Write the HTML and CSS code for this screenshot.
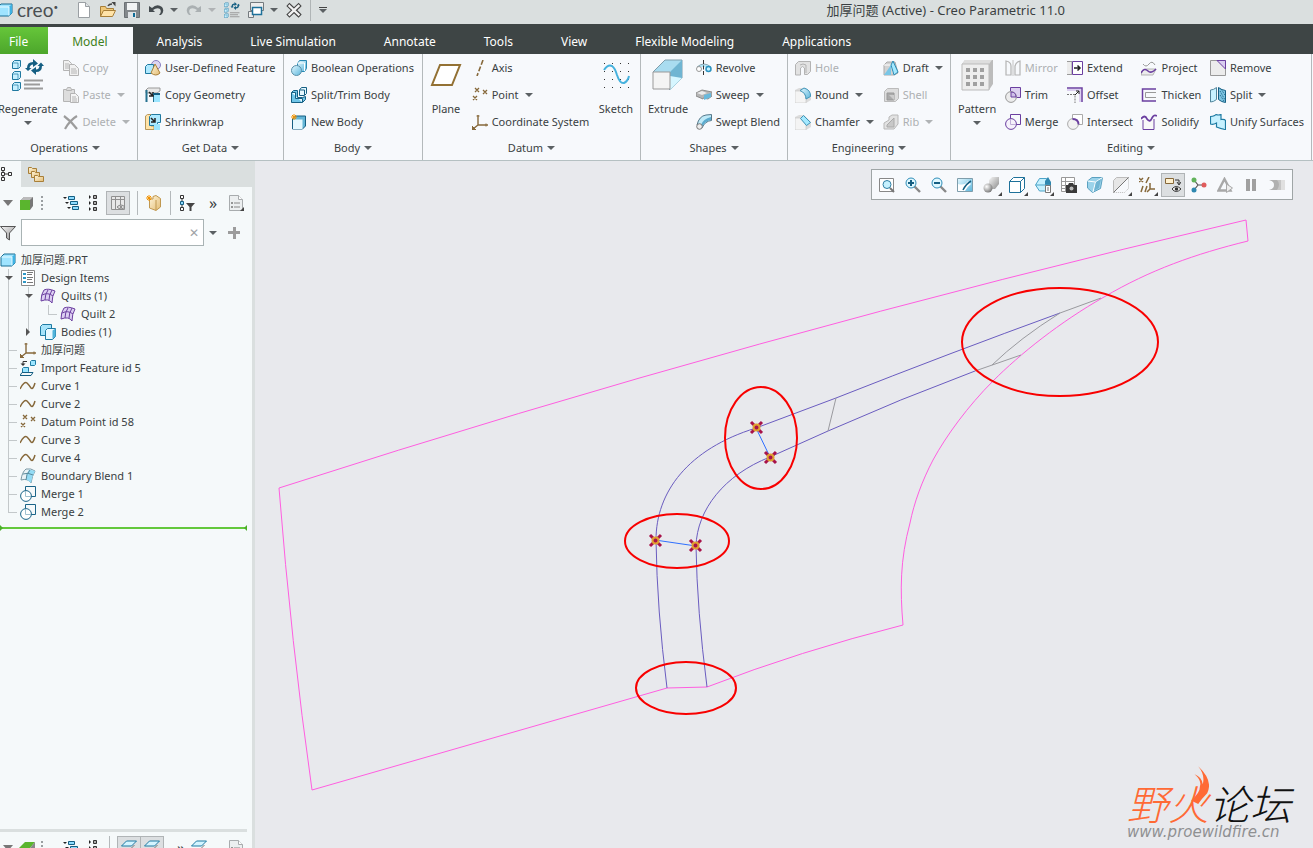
FILE: index.html
```html
<!DOCTYPE html>
<html lang="en">
<head>
  <meta charset="UTF-8">
  <meta name="viewport" content="width=device-width, initial-scale=1.0">
  <title>加厚问题 (Active) - Creo Parametric 11.0</title>
  <link rel="stylesheet" href="styles.css">
</head>
<body>

  <!-- Icon sprite -->
  <svg class="sprite" aria-hidden="true">
    <defs>
      <linearGradient id="g-blue" x1="0" y1="0" x2="1" y2="1"><stop offset="0" stop-color="#e4f8ff"/><stop offset="1" stop-color="#5cb6dc"/></linearGradient>
      <linearGradient id="g-grey" x1="0" y1="0" x2="1" y2="1"><stop offset="0" stop-color="#f6f6f6"/><stop offset="1" stop-color="#8c8c8c"/></linearGradient>
      <linearGradient id="g-tan" x1="0" y1="0" x2="1" y2="1"><stop offset="0" stop-color="#fff6dc"/><stop offset="1" stop-color="#e3bc74"/></linearGradient>
      <radialGradient id="g-ball" cx=".35" cy=".35" r=".7"><stop offset="0" stop-color="#fff"/><stop offset="1" stop-color="#777"/></radialGradient>
    </defs>
    <symbol id="i-cube" viewBox="0 0 16 16"><path d="M1 5l3-3h11v9l-3 3H1z" fill="#9fe4ff" stroke="#1b6f94"/><path d="M12 14V5l3-3v9z" fill="#3fb2e3"/><path d="M1.500 5H12v8.500" fill="none" stroke="#e8faff"/></symbol>
    <symbol id="i-new" viewBox="0 0 16 16"><path d="M2.500.5h7l4 4v11h-11z" fill="#fff" stroke="#9a9fa3"/><path d="M9.500.5v4h4" fill="#dfe3e6" stroke="#9a9fa3"/></symbol>
    <symbol id="i-open" viewBox="0 0 16 16"><path d="M.5 14.500V4.500h5l1 2h7v3" fill="#f0c879" stroke="#a87f38"/><path d="M.5 14.500l3-6h12l-3 6z" fill="#ffe3a8" stroke="#a87f38"/><path d="M8 4q1-2 4-2" fill="none" stroke="#444" stroke-width="1.500"/><path d="M11.500 0l4 0v4.500z" fill="#444"/></symbol>
    <symbol id="i-save" viewBox="0 0 16 16"><path d="M.5.5h15v15H.5z" fill="#83888c" stroke="#6b7074"/><path d="M3 1h10v7H3z" fill="#f2f4f5"/><path d="M4 10h8v6H4z" fill="#dfe3e6"/><path d="M9 11h2v4H9z" fill="#0f6b96"/></symbol>
    <symbol id="i-undo" viewBox="0 0 16 16"><path d="M1 4v6h6L5 8q4-3 7-1 2 3-1 6h2q4-4 1-8-5-4-10 1z" fill="#444b4f"/></symbol>
    <symbol id="i-redo" viewBox="0 0 16 16"><path d="M15 4v6H9l2-2Q7 5 4 7q-2 3 1 6H3q-4-4-1-8 5-4 10 1z" fill="#aab0b2"/></symbol>
    <symbol id="i-regen" viewBox="0 0 32 32">
      <g fill="#c8f0ff" stroke="#2079a0"><path d="M.5 3.500l2-2h6v6l-2 2h-6zM.5 14.500l2-2h6v6l-2 2h-6zM.5 25.500l2-2h6v6l-2 2h-6z"/></g>
      <path d="M1 4h5v5M1 15h5v5M1 26h5v5" fill="none" stroke="#2079a0" stroke-width=".7"/>
      <path d="M15 9q0-6 6-6V0l5 4.500L21 8V5.500q-3 0-3.500 3.500h2L16 12l-3-3zM30 7q0 6-6 6v3l-5-4.500L24 8v2.500q3 0 3.500-3.500h-2L29 3.500 32 7z" fill="#155f83"/>
      <path d="M12 21.500h19M12 25.500h16M12 29.500h19" stroke="#9b9b9b" stroke-width="2"/></symbol>
    <symbol id="i-windows" viewBox="0 0 16 16"><path d="M2.500.5h13v8h-13zM.5 9.500h5v6h-5z" fill="#eee" stroke="#747a7e"/><path d="M4.500 5.500h9v7h-9z" fill="#fff" stroke="#1e719a" stroke-width="1.500"/></symbol>
    <symbol id="i-closewin" viewBox="0 0 16 16"><path d="M3.500 4l9 8.500M12.500 4l-9 8.500" stroke="#444" stroke-width="4.500" stroke-linecap="square"/><path d="M3.500 4l9 8.500M12.500 4l-9 8.500" stroke="#f2f2f2" stroke-width="2.400" stroke-linecap="square"/></symbol>
    <symbol id="i-copy" viewBox="0 0 16 16"><g fill="#f1f1f1" stroke="#b4b4b4"><path d="M.5.5h5l3 3v7h-8z"/><path d="M6.500 4.500h5l4 4v7h-9z"/><path d="M8 9h5M8 11h6M8 13h6M2 4h4M2 6h4M2 8h4"/></g></symbol>
    <symbol id="i-paste" viewBox="0 0 16 16"><g fill="#ddd" stroke="#b4b4b4"><path d="M.5 2.500h11v12H.5z"/><path d="M3.500 2.500l1-2h3l1 2v1h-5z"/><path d="M7.500 6.500h5l3 3v6h-8z" fill="#f4f4f4"/><path d="M9 10h4M9 12h5M9 14h5"/></g></symbol>
    <symbol id="i-delete" viewBox="0 0 16 16"><path d="M1 2q7 5 13 13M14 2Q7 6 2 15" fill="none" stroke="#9c9c9c" stroke-width="2.200"/></symbol>
    <symbol id="i-udf" viewBox="0 0 16 16"><circle cx="11" cy="5" r="4.500" fill="#dcd6f2" stroke="#887fc0"/><path d="M.5 6.500l2-2h6v7l-2 2h-6z" fill="#aee9ff" stroke="#2079a0"/><path d="M10 4l5 9q-4 4-9 0z" fill="url(#g-tan)" stroke="#a87f38"/></symbol>
    <symbol id="i-copygeom" viewBox="0 0 16 16"><path d="M1 3l2-2h12v3l-3 2H1z" fill="#e8e8e8" stroke="#999"/><path d="M1.500 3v12M9 6v9" stroke="#25718f" stroke-width="2"/><path d="M4 5l4 4M8 5v4H4" fill="none" stroke="#222" stroke-width="1.500"/><path d="M9 7h6v8H9z" fill="#9be5ff"/><path d="M8 6h7v2H8z" fill="#155f83"/></symbol>
    <symbol id="i-shrink" viewBox="0 0 16 16"><path d="M.5 2l2-1.500H6V12h3v3.500H.5z" fill="#ffe3a8" stroke="#b8975a"/><path d="M4.500 2.500l2-2h9v8h-3v3h-8z" fill="#aee9ff" stroke="#2079a0"/><path d="M6 4l4 4M10 4v4H6" fill="none" stroke="#222" stroke-width="1.500"/><path d="M9 10h6v6H9z" fill="#9be5ff"/></symbol>
    <symbol id="i-boolean" viewBox="0 0 16 16"><path d="M6.500 3.500l2-3h7v8l-2 3h-7z" fill="url(#g-blue)" stroke="#2a89b3"/><path d="M13.500 11V3h-7" fill="none" stroke="#fff"/><circle cx="5.500" cy="10.500" r="5" fill="url(#g-blue)" stroke="#5a8fa8"/></symbol>
    <symbol id="i-splitbody" viewBox="0 0 16 16"><g stroke="#155f83" fill="#e6f8ff"><path d="M8.500 3l2-2.500h5v6l-2 2h-5z"/><path d="M8.500 3h5v5"/><path d="M.5 5.500l2-2h4v7h5l3-1v3l-3 3H.5z" fill="#70c5e8"/><path d="M.5 5.500h4v6h7v4"/></g></symbol>
    <symbol id="i-newbody" viewBox="0 0 16 16"><path d="M1.500 5l3-3h10v10l-3 3h-10z" fill="#63b5d6" stroke="#155f83"/><path d="M2 5.500h9.500V15H2z" fill="#e4f8ff"/><path d="M3 0v6M0 3h6M1 1l4 4M5 1L1 5" stroke="#f39200"/></symbol>
    <symbol id="i-plane" viewBox="0 0 32 32"><path d="M10 6h20l-8 20H2z" fill="#fff" stroke="#937134" stroke-width="2"/></symbol>
    <symbol id="i-axis" viewBox="0 0 16 16"><path d="M11 0L5 16" stroke="#86683a" stroke-width="1.600" stroke-dasharray="5 2"/></symbol>
    <symbol id="i-point" viewBox="0 0 16 16"><path d="M3 1l4 4M7 1L3 5M11 3l4 4M15 3l-4 4M1 9l4 4M5 9l-4 4" stroke="#86683a" stroke-width="1.300"/></symbol>
    <symbol id="i-csys" viewBox="0 0 16 16"><path d="M6 1v10h10M6 11l-5 4" fill="none" stroke="#86683a" stroke-width="1.400"/><path d="M4.500 2h3M14 9.500v3M0 12v4h4z" fill="#86683a" stroke="#86683a"/></symbol>
    <symbol id="i-sketch" viewBox="0 0 32 32"><g fill="none" stroke="#333" stroke-dasharray="1 7"><path d="M4 4.500h26M4 12.500h26M4 20.500h26M4 28.500h26"/></g><path d="M4 11Q8 5 12 7q3 2 5 9 3 9 7 8 4-2 5-7" fill="none" stroke="#45b1dd" stroke-width="2"/></symbol>
    <symbol id="i-extrude" viewBox="0 0 32 32"><path d="M1 13L13 1h17v18L18 31z" fill="#a9dcf0" stroke="#7f9dab"/><path d="M18 13L30 1v18L18 31z" fill="#70b5d2"/><path d="M18 31V13M18 31l12-12-12-2z" fill="#d6f6ff"/><path d="M1 13h17v17H1z" fill="#f4f4f4" stroke="#999"/></symbol>
    <symbol id="i-revolve" viewBox="0 0 16 16"><path d="M1 7q7-6 14 0" fill="#b4e6f8" stroke="#89a8b4"/><circle cx="3" cy="9" r="2.500" fill="#fff" stroke="#999"/><circle cx="12.500" cy="9" r="2.500" fill="#c6f1ff" stroke="#2a93c0" stroke-width="1.500"/><path d="M7.500 0v16" stroke="#333" stroke-dasharray="4 1.500"/></symbol>
    <symbol id="i-sweep" viewBox="0 0 16 16"><path d="M0 6l6-3 10 2v4l-4 3-5-1v1L0 9z" fill="#b5b5b5" stroke="#8d8d8d"/><path d="M1 6l5-2 5 2-5 2z" fill="#ececec"/><path d="M8 8l7-2v4l-7 3z" fill="#68b9dc"/></symbol>
    <symbol id="i-sweptblend" viewBox="0 0 16 16"><path d="M1 11Q3 2 10 1l5.500-.5v6Q9 7 6 14z" fill="#bfeaf8" stroke="#55788a"/><path d="M5 11q2-6 10-8v3Q9 7 6 13z" fill="#5babce"/><circle cx="3.500" cy="12.500" r="2.800" fill="#eee" stroke="#777"/></symbol>
    <symbol id="i-hole" viewBox="0 0 16 16"><path d="M.5 4.500l3-3h12v10l-3 3h-3V8q-2-3-4 0v7h-5z" fill="#e2e2e2" stroke="#b3b3b3"/><path d="M5 5q3-2 6 0v8" fill="none" stroke="#b3b3b3"/></symbol>
    <symbol id="i-round" viewBox="0 0 16 16"><path d="M0 3l4-2h5l7 7v5l-5 3H0z" fill="#dcdcdc"/><path d="M0 4h5q6 1 6 8v4H0z" fill="#f4f4f4" stroke="#c2c2c2" stroke-width=".6"/><path d="M5 3.500L9 1q7 2 6.500 8.500L11 12Q11 6 5 3.500z" fill="url(#g-blue)" stroke="#3f94b8"/></symbol>
    <symbol id="i-chamfer" viewBox="0 0 16 16"><path d="M0 3l4-2h5l7 7v5l-5 3H0z" fill="#dcdcdc"/><path d="M0 4h5l6 6v6H0z" fill="#f4f4f4" stroke="#c2c2c2" stroke-width=".6"/><path d="M5.500 4.500l3-3 7 7-4 3z" fill="#a4e9ff" stroke="#3f94b8"/></symbol>
    <symbol id="i-draft" viewBox="0 0 16 16"><path d="M1 5l3-3h8l3 11-4 2H1z" fill="#d2d2d2" stroke="#aaa"/><path d="M1 5h7l3 10" fill="none" stroke="#fff"/><path d="M1 15l7-10v10z" fill="#79c6e6"/><path d="M8 5l2-4 5 11-4 3z" fill="#a4e9ff" stroke="#2a89b3"/></symbol>
    <symbol id="i-shell" viewBox="0 0 16 16"><path d="M1.500 4.500l3-3h11v10l-3 3h-11z" fill="#ddd" stroke="#bbb"/><path d="M4 6h7v7H4z" fill="#aaa" stroke="#999"/><path d="M6 8h5v5" fill="#ccc"/></symbol>
    <symbol id="i-rib" viewBox="0 0 16 16"><path d="M1 9l5-3V3l3-2h6v9l-4 5H1z" fill="#e2e2e2" stroke="#b8b8b8"/><path d="M4 11l7-7v9H4z" fill="#c8c8c8" stroke="#aaa"/></symbol>
    <symbol id="i-pattern" viewBox="0 0 32 32"><path d="M1 5l3-4h28v24l-4 6H1z" fill="#bcbcbc"/><path d="M1 5l3-4h27l-3 4z" fill="#dedede"/><path d="M1 5h27v26H1z" fill="#eee" stroke="#bbb"/><path d="M5 9h4v4H5zm7 0h4v4h-4zm7 0h4v4h-4zM5 16h4v4H5zm7 0h4v4h-4zm7 0h4v4h-4zM5 23h4v4H5zm7 0h4v4h-4zm7 0h4v4h-4z" fill="#a0a0a0"/></symbol>
    <symbol id="i-mirror" viewBox="0 0 16 16"><path d="M1 1q5 1 5 5v9H1zM15 1q-4 1-5 5v9h5z" fill="none" stroke="#b3b3b3" stroke-width="1.200"/><path d="M8 0v16" stroke="#c4c4c4"/></symbol>
    <symbol id="i-trim" viewBox="0 0 16 16"><path d="M5.500.5h10v10h-10z" fill="#dcd0f0" stroke="#6b3fa0"/><circle cx="6" cy="10" r="5.400" fill="#ececec" stroke="#999"/><path d="M6 5q5 0 5 5H6z" fill="#cfc0e8" stroke="#6b3fa0"/></symbol>
    <symbol id="i-merge" viewBox="0 0 16 16"><path d="M5.500 5V.5h10v10H11" fill="none" stroke="#6b3fa0"/><circle cx="6" cy="10" r="5.400" fill="#f6f2fb" stroke="#6b3fa0"/><path d="M5.500 5v5.500H11" fill="none" stroke="#c0b0d8"/></symbol>
    <symbol id="i-extend" viewBox="0 0 16 16"><path d="M0 1.500h5v13H0" fill="#ececec" stroke="#999"/><path d="M5.500 1.500h10v13h-10z" fill="#fff" stroke="#6b3fa0"/><path d="M7 8h5M10.500 5.500L13 8l-2.500 2.500" fill="none" stroke="#222" stroke-width="1.500"/></symbol>
    <symbol id="i-offset" viewBox="0 0 16 16"><path d="M0 1h15v14" fill="none" stroke="#6b3fa0" stroke-width="1.500"/><path d="M0 3h13v12" fill="none" stroke="#dcd0f0" stroke-width="2"/><path d="M0 7.500h8V16" fill="none" stroke="#777" stroke-dasharray="2 1"/><path d="M8 8l4-4M9 4h3v3" fill="none" stroke="#222"/></symbol>
    <symbol id="i-intersect" viewBox="0 0 16 16"><path d="M5.500.5h10v10h-10z" fill="#fff" stroke="#aaa"/><circle cx="6" cy="10" r="5.400" fill="#f2f2f2" stroke="#aaa"/><path d="M5.500 5q6 0 6 5.500" fill="none" stroke="#6b3fa0" stroke-width="1.800"/></symbol>
    <symbol id="i-project" viewBox="0 0 16 16"><path d="M2 4q3 4 6 0t6 1" fill="none" stroke="#999"/><path d="M1 12l3-3h11l-3 6H0z" fill="#ececec" stroke="#999" stroke-width=".7"/><path d="M0 13q3-6 7-2 3 3 8-2" fill="none" stroke="#6b3fa0" stroke-width="1.500"/></symbol>
    <symbol id="i-thicken" viewBox="0 0 16 16"><path d="M15 2H1.500v12H15" fill="none" stroke="#6b3fa0" stroke-width="1.500"/><path d="M15 5.500H4.500v5H15" fill="none" stroke="#999"/></symbol>
    <symbol id="i-solidify" viewBox="0 0 16 16"><path d="M2 6v9.500h11V5" fill="#f8f8f8" stroke="#6b3fa0"/><path d="M0 5Q4 0 6 5q3 4 5-1 2-4 5-2" fill="none" stroke="#6b3fa0" stroke-width="1.800"/></symbol>
    <symbol id="i-remove" viewBox="0 0 16 16"><path d="M.5.500h15v15H.5z" fill="#ececec" stroke="#999"/><path d="M7 .5h8.500V9z" fill="#d9cdf0" stroke="#6b3fa0"/></symbol>
    <symbol id="i-split" viewBox="0 0 16 16"><path d="M.5 3q3 0 6-2.500v12q-3 2.500-6 2.500z" fill="#c6f1ff" stroke="#52859b"/><path d="M8.500.5q3 2.500 7 3v12q-4-.5-7-3z" fill="#7cc4e2" stroke="#155f83"/><path d="M10 4l5 9M10 8l4 6M11 2l4 6" stroke="#155f83" stroke-dasharray="1 1"/></symbol>
    <symbol id="i-unify" viewBox="0 0 16 16"><path d="M.5 2.500Q5 2 6 .5q2 1 5 0v5q4-.5 4.500 1v9Q11 15 6.500 13V9Q3 11 .5 10z" fill="#c6f1ff" stroke="#1e7ba3" stroke-width="1.200"/></symbol>
    <symbol id="i-zoomfit" viewBox="0 0 16 16"><path d="M.5 1.500h14v13H.5z" fill="#fff" stroke="#888"/><path d="M11 11l4 4" stroke="#777" stroke-width="2"/><circle cx="8" cy="7.500" r="4" fill="#c6f1ff" stroke="#2f7ea3"/></symbol>
    <symbol id="i-zoomin" viewBox="0 0 16 16"><path d="M9 9l6 6" stroke="#888" stroke-width="2.400"/><circle cx="6" cy="6" r="5" fill="#e0f8ff" stroke="#2f8db8"/><path d="M3 6h6M6 3v6" stroke="#155f83" stroke-width="2"/></symbol>
    <symbol id="i-zoomout" viewBox="0 0 16 16"><path d="M9 9l6 6" stroke="#888" stroke-width="2.400"/><circle cx="6" cy="6" r="5" fill="#e0f8ff" stroke="#2f8db8"/><path d="M3 6h6" stroke="#155f83" stroke-width="2"/></symbol>
    <symbol id="i-repaint" viewBox="0 0 16 16"><path d="M.5 1.500h15v13H.5z" fill="url(#g-blue)" stroke="#7f9dab"/><path d="M1 14V7q7 2 10-3l3 3q-4 3-6 7z" fill="#fff"/><path d="M14 4q-5 3-8 9" stroke="#155f83" fill="none" stroke-width="1.500"/></symbol>
    <symbol id="i-shade" viewBox="0 0 16 16"><path d="M6 3l3-3h7v7l-4 5H6z" fill="url(#g-grey)"/><circle cx="5" cy="11" r="4.500" fill="url(#g-ball)"/></symbol>
    <symbol id="i-style" viewBox="0 0 16 16"><path d="M.5 4.500l4-4h11v11l-4 4H.5z" fill="#fff" stroke="#1e719a"/><path d="M.5 4.500h11v11M11.500 4.500l4-4" fill="none" stroke="#1e719a"/></symbol>
    <symbol id="i-orient" viewBox="0 0 16 16"><path d="M.5 8l4-6.500h7L15.500 8l-4 6h-7z" fill="#c6f1ff" stroke="#4ca3c7"/><path d="M10 8V4l3-4 3 5v4z" fill="#2f88b0"/><path d="M1 8h14" stroke="#4ca3c7"/><path d="M10.500 8.500h5v7h-5z" fill="#fff" stroke="#777"/><path d="M12 11h2M12 13h2" stroke="#777"/></symbol>
    <symbol id="i-viewmgr" viewBox="0 0 16 16"><path d="M.5.500h13v14H.5zM.5 4.500h13M.5 8.500h13M.5 11.500h13M4.500.5v14" fill="#fff" stroke="#999"/><path d="M5 8h2l1-2h4l1 2h3v8H5z" fill="#3a3a3a"/><circle cx="10.500" cy="11.500" r="2" fill="#bbb"/></symbol>
    <symbol id="i-persp" viewBox="0 0 16 16"><path d="M.5 4L5 .5h10.500l-2 11-8 4L.5 11z" fill="#9bd3ea" stroke="#5ba1c0"/><path d="M.5 4l8 1 7-4.500M8.500 5L6 15" fill="none" stroke="#fff"/><path d="M9 5l5-3-2 9-5 3z" fill="#6fb4d2"/></symbol>
    <symbol id="i-section" viewBox="0 0 16 16"><path d="M.5 3.500l3-3h12l-15 15z" fill="#e6e6e6"/><path d="M.5 15.500V3.500l3-3h12" fill="none" stroke="#bbb"/><path d="M15.500.5v11l-4 4H.5" fill="none" stroke="#bbb" stroke-dasharray="1 1"/><path d="M.5 15.500l15-15" stroke="#777"/></symbol>
    <symbol id="i-datumdisp" viewBox="0 0 16 16"><path d="M0 1l4 4M4 1L0 5M10 0L7 6M4 9l-2 6M8 9l-2 6M11 6v6h5M11 12l-3 3" fill="none" stroke="#86683a" stroke-width="1.500"/></symbol>
    <symbol id="i-annot" viewBox="0 0 16 16"><path d="M.5 1.500h8v5h-8z" fill="#fff1cf" stroke="#86683a"/><path d="M10 3h4v4M12 5l2 3 2-3" fill="none" stroke="#333"/><path d="M7 12q4-5 9 0-5 5-9 0z" fill="#fff" stroke="#333"/><circle cx="11.500" cy="12" r="1.800" fill="#333"/></symbol>
    <symbol id="i-spin" viewBox="0 0 16 16"><path d="M3 3l4 5-4 5M7 8h6" fill="none" stroke="#555" stroke-width="1.200"/><circle cx="3" cy="3" r="2.500" fill="#62b35b"/><circle cx="3" cy="13" r="2.500" fill="#2f88b0"/><circle cx="13" cy="8" r="2.500" fill="#e05c5c"/></symbol>
    <symbol id="i-sim" viewBox="0 0 16 16"><path d="M7.500 2l6 11.500h-12z" fill="none" stroke="#a8a8a8" stroke-width="2.400"/><path d="M9.500 7l6 4-6 4.500z" fill="#eee" stroke="#a8a8a8"/></symbol>
    <symbol id="i-pause" viewBox="0 0 16 16"><path d="M3 2h4v12H3zM9 2h4v12H9z" fill="#a0a0a0"/></symbol>
    <symbol id="i-result" viewBox="0 0 16 16"><path d="M0 3h16v10H0q6-1 6-5T0 3z" fill="#c6c6c6"/><path d="M0 3h8q4 4 0 10H0q5-1 5-5T0 3z" fill="#b0b0b0"/><path d="M12 3h4v10h-4z" fill="#e0e0e0"/></symbol>
    <symbol id="i-treetab" viewBox="0 0 16 16"><path d="M1.500 1.500h3v3h-3zM1.500 6.500h3v3h-3zM1.500 11.500h3v3h-3zM8.500 6.500h3v3h-3zM5 8h3M3 5v1M3 10v1" fill="none" stroke="#333"/></symbol>
    <symbol id="i-folders" viewBox="0 0 16 16"><g fill="url(#g-tan)" stroke="#a87f38"><path d="M.5 1.500h3l1 1h4v5h-8z"/><path d="M3.500 5.500h3l1 1h4v5h-8z"/><path d="M6.500 9.500h3l1 1h5v5h-9z"/></g></symbol>
    <symbol id="i-green" viewBox="0 0 16 16"><path d="M2 5l3-3h9v9l-3 4z" fill="#777"/><path d="M2 5l3-3h9l-3 3z" fill="#bbb"/><path d="M1 5h10v10H1z" fill="#5ab52e"/></symbol>
    <symbol id="i-levels" viewBox="0 0 16 16"><path d="M0 2h4L2 4zM2 7h4L4 9zM4 12h4l-2 2z" fill="#222"/><path d="M5.500 1.500h6v3h-6zM7.500 6.500h7v3h-7zM9.500 11.500h6v3h-6z" fill="#8edcff" stroke="#155f83"/></symbol>
    <symbol id="i-collapse" viewBox="0 0 16 16"><path d="M4 0v4l2-2zM4 6v4l2-2zM4 12v4l2-2z" fill="#222"/><path d="M8.500.5h3v3h-3zM8.500 6.500h3v3h-3zM8.500 12.500h3v3h-3z" fill="#aaa" stroke="#333"/></symbol>
    <symbol id="i-columns" viewBox="0 0 16 16"><path d="M1.500 1.500h13v13h-13zM1.500 4.500h13M5.500 1.500v13M10.500 1.500v13" fill="#e8e8e8" stroke="#909090"/><path d="M7 12q4-4 8 0-4 4-8 0z" fill="#ddd" stroke="#888"/><circle cx="11" cy="12" r="1" fill="#777"/></symbol>
    <symbol id="i-newfeat" viewBox="0 0 16 16"><path d="M3.500 4H7V1.500l3-1 4.500 3v8.500L10 15.500l-6.500-2.500z" fill="url(#g-tan)" stroke="#c09850"/><path d="M10 5v10" stroke="#c09850"/><path d="M3 0v6M0 3h6M1 1l4 4M5 1L1 5" stroke="#f39200"/></symbol>
    <symbol id="i-treefilter" viewBox="0 0 16 16"><path d="M1.500.5h3v3h-3zM1.500 12.500h3v3h-3zM3 4v8" fill="#fff" stroke="#333"/><path d="M1.500 6.500h3v3h-3z" fill="#8edcff" stroke="#155f83"/><path d="M7 8h9l-3.500 4v4h-2v-4z" fill="#444"/></symbol>
    <symbol id="i-page" viewBox="0 0 16 16"><path d="M1.500.5h9l4 4v11h-13z" fill="#eceff0" stroke="#a8acae"/><path d="M10.500.5v4h4" fill="#fff" stroke="#a8acae"/><path d="M6 8h6M6 12h6" stroke="#888"/><circle cx="4" cy="8" r="1" fill="#777"/><circle cx="4" cy="12" r="1" fill="#777"/></symbol>
    <symbol id="i-funnel" viewBox="0 0 16 16"><path d="M.5 1.500h15L9.500 8v7l-3-2V8z" fill="url(#g-grey)" stroke="#555"/></symbol>
    <symbol id="i-design" viewBox="0 0 16 16"><path d="M1.500.5h13v15h-13z" fill="#fff" stroke="#888"/><path d="M3 3h3v2H3zM3 7h3v2H3zM3 11h3v2H3z" fill="#2f98c6"/><path d="M7 2.500h6M7 4.500h5M7 7.500h6M7 9.500h5M7 12.500h6" stroke="#777"/></symbol>
    <symbol id="i-quilt" viewBox="0 0 16 16"><path d="M4 2q4-2 11 1-3 5-3 12-3-5-11-2Q1 6 4 2z" fill="#dccff2" stroke="#6b3fa0"/><path d="M2 7q6-3 11 1M8 2Q5 6 5 12M12 2Q9 7 9 12" fill="none" stroke="#6b3fa0"/></symbol>
    <symbol id="i-bodies" viewBox="0 0 16 16"><path d="M.5 2.500l2-2h9v8l-2 3h-9z" fill="#a7e4fa" stroke="#1e7ba3"/><path d="M5.500 6.500l2-2h8v8l-3 3h-7z" fill="#e8f9ff" stroke="#1e7ba3"/><path d="M12.500 15V6.500l3-2v8z" fill="#4fb3da"/></symbol>
    <symbol id="i-import" viewBox="0 0 16 16"><path d="M10.500 1.500l1-1h4v4l-1 1h-4z" fill="#9be5ff" stroke="#1e7ba3"/><path d="M3 5V1.500h4" fill="none" stroke="#333"/><path d="M0.500 3.500h5L3 6z" fill="#333"/><path d="M2.500 8.500l1-1h5v4l-1 1h-5z" fill="#9be5ff" stroke="#1e7ba3"/><path d="M0 15.500l2-3h11l-2 3z" fill="none" stroke="#155f83"/></symbol>
    <symbol id="i-curve" viewBox="0 0 16 16"><path d="M0 11Q4 3 7 5q2 2 4 5 2 2 4-5" fill="none" stroke="#86683a" stroke-width="1.500"/></symbol>
    <symbol id="i-blend" viewBox="0 0 16 16"><path d="M1 12Q2 4 6 1q5-1 9 2-3 5-4 12-3-5-10-3z" fill="#eaf3f6" stroke="#7a98a4"/><path d="M9 1.500q-3 5-3 10 3 1 5 3.500 1-7 4-12-3-1-6-1.500z" fill="#93dbf4"/><path d="M3 6q5-2 10 1M10 2Q6 6 6 12" fill="none" stroke="#5a8a9c"/></symbol>
    <symbol id="i-mergefeat" viewBox="0 0 16 16"><path d="M5.500 5V.5h10v10H11" fill="none" stroke="#1a6488"/><circle cx="6" cy="10" r="5.400" fill="#fff" stroke="#1a6488"/><path d="M5.500 5v5.500H11" fill="none" stroke="#9fc0cf"/></symbol>
    <symbol id="i-layer" viewBox="0 0 16 16"><path d="M.5 6l5-5h10l-5 5z" fill="#d4f4ff" stroke="#1e7ba3"/><path d="M.5 9h9l4-4" fill="none" stroke="#777"/></symbol>
    <symbol id="i-leaf" viewBox="0 0 16 16"><path d="M0 8l6-6h10l-5 6z" fill="#5ab52e"/><path d="M11 8l5-6v6z" fill="#888"/></symbol>
  </svg>

  <header class="title-bar">
    <svg class="icon app-icon"><use href="#i-cube"/></svg>
    <span class="brand">creo<sup>•</sup></span>
    <div class="quick-access">
      <button aria-label="New"><svg class="icon"><use href="#i-new"/></svg></button>
      <button aria-label="Open"><svg class="icon"><use href="#i-open"/></svg></button>
      <button aria-label="Save"><svg class="icon"><use href="#i-save"/></svg></button>
      <button aria-label="Undo"><svg class="icon"><use href="#i-undo"/></svg><i class="caret"></i></button>
      <button aria-label="Redo" disabled><svg class="icon"><use href="#i-redo"/></svg><i class="caret"></i></button>
      <button aria-label="Regenerate"><svg class="icon"><use href="#i-regen"/></svg></button>
      <button aria-label="Windows"><svg class="icon"><use href="#i-windows"/></svg><i class="caret"></i></button>
      <button aria-label="Close window"><svg class="icon"><use href="#i-closewin"/></svg></button>
      <button class="customize" aria-label="Customize"><i class="caret"></i></button>
    </div>
    <h1>加厚问题 (Active) - Creo Parametric 11.0</h1>
  </header>

  <nav class="tabs">
    <a href="#" class="file">File</a>
    <a href="#" class="active">Model</a>
    <a href="#">Analysis</a>
    <a href="#">Live Simulation</a>
    <a href="#">Annotate</a>
    <a href="#">Tools</a>
    <a href="#">View</a>
    <a href="#">Flexible Modeling</a>
    <a href="#">Applications</a>
  </nav>

  <div class="ribbon">
    <section class="group operations">
      <div class="group-body">
        <button class="big"><svg class="icon-lg"><use href="#i-regen"/></svg><span>Regenerate</span><i class="caret"></i></button>
        <div class="cmds">
          <button disabled><svg class="icon"><use href="#i-copy"/></svg>Copy</button>
          <button disabled><svg class="icon"><use href="#i-paste"/></svg>Paste<i class="caret"></i></button>
          <button disabled><svg class="icon"><use href="#i-delete"/></svg>Delete<i class="caret"></i></button>
        </div>
      </div>
      <button class="group-title">Operations<i class="caret"></i></button>
    </section>

    <section class="group">
      <div class="group-body">
        <div class="cmds">
          <button><svg class="icon"><use href="#i-udf"/></svg>User-Defined Feature</button>
          <button><svg class="icon"><use href="#i-copygeom"/></svg>Copy Geometry</button>
          <button><svg class="icon"><use href="#i-shrink"/></svg>Shrinkwrap</button>
        </div>
      </div>
      <button class="group-title">Get Data<i class="caret"></i></button>
    </section>

    <section class="group">
      <div class="group-body">
        <div class="cmds">
          <button><svg class="icon"><use href="#i-boolean"/></svg>Boolean Operations</button>
          <button><svg class="icon"><use href="#i-splitbody"/></svg>Split/Trim Body</button>
          <button><svg class="icon"><use href="#i-newbody"/></svg>New Body</button>
        </div>
      </div>
      <button class="group-title">Body<i class="caret"></i></button>
    </section>

    <section class="group">
      <div class="group-body">
        <button class="big"><svg class="icon-lg"><use href="#i-plane"/></svg><span>Plane</span></button>
        <div class="cmds">
          <button><svg class="icon"><use href="#i-axis"/></svg>Axis</button>
          <button><svg class="icon"><use href="#i-point"/></svg>Point<i class="caret"></i></button>
          <button><svg class="icon"><use href="#i-csys"/></svg>Coordinate System</button>
        </div>
        <button class="big"><svg class="icon-lg"><use href="#i-sketch"/></svg><span>Sketch</span></button>
      </div>
      <button class="group-title">Datum<i class="caret"></i></button>
    </section>

    <section class="group">
      <div class="group-body">
        <button class="big"><svg class="icon-lg"><use href="#i-extrude"/></svg><span>Extrude</span></button>
        <div class="cmds">
          <button><svg class="icon"><use href="#i-revolve"/></svg>Revolve</button>
          <button><svg class="icon"><use href="#i-sweep"/></svg>Sweep<i class="caret"></i></button>
          <button><svg class="icon"><use href="#i-sweptblend"/></svg>Swept Blend</button>
        </div>
      </div>
      <button class="group-title">Shapes<i class="caret"></i></button>
    </section>

    <section class="group">
      <div class="group-body">
        <div class="cmds">
          <button disabled><svg class="icon"><use href="#i-hole"/></svg>Hole</button>
          <button><svg class="icon"><use href="#i-round"/></svg>Round<i class="caret"></i></button>
          <button><svg class="icon"><use href="#i-chamfer"/></svg>Chamfer<i class="caret"></i></button>
        </div>
        <div class="cmds">
          <button><svg class="icon"><use href="#i-draft"/></svg>Draft<i class="caret"></i></button>
          <button disabled><svg class="icon"><use href="#i-shell"/></svg>Shell</button>
          <button disabled><svg class="icon"><use href="#i-rib"/></svg>Rib<i class="caret"></i></button>
        </div>
      </div>
      <button class="group-title">Engineering<i class="caret"></i></button>
    </section>

    <section class="group">
      <div class="group-body">
        <button class="big"><svg class="icon-lg"><use href="#i-pattern"/></svg><span>Pattern</span><i class="caret"></i></button>
        <div class="cmds">
          <button disabled><svg class="icon"><use href="#i-mirror"/></svg>Mirror</button>
          <button><svg class="icon"><use href="#i-trim"/></svg>Trim</button>
          <button><svg class="icon"><use href="#i-merge"/></svg>Merge</button>
        </div>
        <div class="cmds">
          <button><svg class="icon"><use href="#i-extend"/></svg>Extend</button>
          <button><svg class="icon"><use href="#i-offset"/></svg>Offset</button>
          <button><svg class="icon"><use href="#i-intersect"/></svg>Intersect</button>
        </div>
        <div class="cmds">
          <button><svg class="icon"><use href="#i-project"/></svg>Project</button>
          <button><svg class="icon"><use href="#i-thicken"/></svg>Thicken</button>
          <button><svg class="icon"><use href="#i-solidify"/></svg>Solidify</button>
        </div>
        <div class="cmds">
          <button><svg class="icon"><use href="#i-remove"/></svg>Remove</button>
          <button><svg class="icon"><use href="#i-split"/></svg>Split<i class="caret"></i></button>
          <button><svg class="icon"><use href="#i-unify"/></svg>Unify Surfaces</button>
        </div>
      </div>
      <button class="group-title">Editing<i class="caret"></i></button>
    </section>
  </div>

  <main class="workspace">
    <aside class="sidebar">
      <div class="side-tabs">
        <button class="active" aria-label="Model Tree"><svg class="icon"><use href="#i-treetab"/></svg></button>
        <button aria-label="Folder Browser"><svg class="icon"><use href="#i-folders"/></svg></button>
      </div>

      <div class="side-tools">
        <i class="caret big-caret"></i>
        <svg class="icon"><use href="#i-green"/></svg>
        <span class="grip"></span>
        <button aria-label="Expand levels"><svg class="icon"><use href="#i-levels"/></svg></button>
        <button aria-label="Collapse"><svg class="icon"><use href="#i-collapse"/></svg></button>
        <button class="pressed" aria-label="Tree columns"><svg class="icon"><use href="#i-columns"/></svg></button>
        <span class="sep"></span>
        <button aria-label="New feature"><svg class="icon"><use href="#i-newfeat"/></svg></button>
        <span class="sep"></span>
        <button aria-label="Tree filters"><svg class="icon"><use href="#i-treefilter"/></svg></button>
        <button class="more" aria-label="More">»</button>
        <button class="corner" aria-label="Settings"><svg class="icon"><use href="#i-page"/></svg></button>
      </div>

      <div class="search-row">
        <svg class="icon"><use href="#i-funnel"/></svg>
        <div class="search-box">
          <input type="text" aria-label="Search the model tree">
          <button aria-label="Clear">✕</button>
        </div>
        <i class="caret"></i>
        <button class="add" aria-label="Add filter"></button>
      </div>

      <div class="tree">
        <div class="node"><svg class="icon"><use href="#i-cube"/></svg>加厚问题.PRT</div>
        <ul>
          <li class="open">
            <div class="node"><svg class="icon"><use href="#i-design"/></svg>Design Items</div>
            <ul>
              <li class="open">
                <div class="node"><svg class="icon"><use href="#i-quilt"/></svg>Quilts (1)</div>
                <ul>
                  <li><div class="node"><svg class="icon"><use href="#i-quilt"/></svg>Quilt 2</div></li>
                </ul>
              </li>
              <li class="closed"><div class="node"><svg class="icon"><use href="#i-bodies"/></svg>Bodies (1)</div></li>
            </ul>
          </li>
          <li><div class="node"><svg class="icon"><use href="#i-csys"/></svg>加厚问题</div></li>
          <li><div class="node"><svg class="icon"><use href="#i-import"/></svg>Import Feature id 5</div></li>
          <li><div class="node"><svg class="icon"><use href="#i-curve"/></svg>Curve 1</div></li>
          <li><div class="node"><svg class="icon"><use href="#i-curve"/></svg>Curve 2</div></li>
          <li><div class="node"><svg class="icon"><use href="#i-point"/></svg>Datum Point id 58</div></li>
          <li><div class="node"><svg class="icon"><use href="#i-curve"/></svg>Curve 3</div></li>
          <li><div class="node"><svg class="icon"><use href="#i-curve"/></svg>Curve 4</div></li>
          <li><div class="node"><svg class="icon"><use href="#i-blend"/></svg>Boundary Blend 1</div></li>
          <li><div class="node"><svg class="icon"><use href="#i-mergefeat"/></svg>Merge 1</div></li>
          <li><div class="node"><svg class="icon"><use href="#i-mergefeat"/></svg>Merge 2</div></li>
        </ul>
        <div class="insert-bar"></div>
      </div>

      <div class="layers">
        <div class="side-tools">
          <i class="caret big-caret"></i>
          <svg class="icon"><use href="#i-leaf"/></svg>
          <span class="grip"></span>
          <button aria-label="Expand levels"><svg class="icon"><use href="#i-levels"/></svg></button>
          <button aria-label="Collapse"><svg class="icon"><use href="#i-collapse"/></svg></button>
          <span class="sep"></span>
          <button class="pressed" aria-label="Show layer"><svg class="icon"><use href="#i-layer"/></svg></button>
          <button class="pressed" aria-label="Hide layer"><svg class="icon"><use href="#i-layer"/></svg></button>
          <button class="more" aria-label="More">»</button>
          <button aria-label="Layer"><svg class="icon"><use href="#i-layer"/></svg></button>
          <button class="corner" aria-label="Settings"><svg class="icon"><use href="#i-page"/></svg></button>
        </div>
      </div>
    </aside>

    <div class="viewport">
      <svg class="model" viewBox="255 161 1058 687" preserveAspectRatio="xMinYMin meet">
        <g class="surface">
          <path d="M279 488Q757 334 1246 220L1248 241"/>
          <path d="M279 488Q291 642 312 790L667 688L707 687Q800 651 903 625"/>
          <path d="M1248 241C1195 254 1150 270 1104 297C1060 322 1020 354 993 381C968 406 946 436 933 460C922 481 914 503 910 523C900 560 900 590 903 625"/>
        </g>
        <g class="edge">
          <path d="M667 688Q657 610 656 540C656 492 688 449 756 428L836 398Q950 353 1060 313"/>
          <path d="M707 687Q697 610 696 546C697 510 724 475 770 457L828 431Q900 399 975 371"/>
        </g>
        <path class="hidden-edge" d="M836 398L828 431M975 371L1021 355M1060 313L1101 298M1060 313Q1020 338 992 365"/>
        <path class="pick" d="M756 428L770 457M655 540L696 546"/>
        <g class="markers">
          <g id="marker"><path d="M650 535l11 11M661 535l-11 11"/><circle cx="655.500" cy="540.500" r="3"/></g>
          <use href="#marker" x="40" y="5"/>
          <use href="#marker" x="101" y="-113"/>
          <use href="#marker" x="115" y="-83"/>
        </g>
        <g class="callouts">
          <ellipse cx="1060" cy="342" rx="98" ry="54"/>
          <ellipse cx="761" cy="438" rx="36" ry="51"/>
          <ellipse cx="677" cy="541" rx="52" ry="27"/>
          <ellipse cx="686" cy="688" rx="50" ry="26"/>
        </g>
      </svg>

      <div class="view-tools">
        <button aria-label="Refit"><svg class="icon"><use href="#i-zoomfit"/></svg></button>
        <button aria-label="Zoom in"><svg class="icon"><use href="#i-zoomin"/></svg></button>
        <button aria-label="Zoom out"><svg class="icon"><use href="#i-zoomout"/></svg></button>
        <button aria-label="Repaint"><svg class="icon"><use href="#i-repaint"/></svg></button>
        <button class="corner" aria-label="Rendering"><svg class="icon"><use href="#i-shade"/></svg></button>
        <button class="corner" aria-label="Display style"><svg class="icon"><use href="#i-style"/></svg></button>
        <button class="corner" aria-label="Saved orientations"><svg class="icon"><use href="#i-orient"/></svg></button>
        <button aria-label="View manager"><svg class="icon"><use href="#i-viewmgr"/></svg></button>
        <button aria-label="Perspective"><svg class="icon"><use href="#i-persp"/></svg></button>
        <button class="corner" aria-label="Section"><svg class="icon"><use href="#i-section"/></svg></button>
        <button class="corner" aria-label="Datum display"><svg class="icon"><use href="#i-datumdisp"/></svg></button>
        <button class="pressed" aria-label="Annotation display"><svg class="icon"><use href="#i-annot"/></svg></button>
        <button aria-label="Spin center"><svg class="icon"><use href="#i-spin"/></svg></button>
        <button aria-label="Simulate" disabled><svg class="icon"><use href="#i-sim"/></svg></button>
        <button aria-label="Pause" disabled><svg class="icon"><use href="#i-pause"/></svg></button>
        <button aria-label="Results" disabled><svg class="icon"><use href="#i-result"/></svg></button>
      </div>

      <div class="watermark">
        <svg class="flame" viewBox="0 0 20 44"><path d="M8 0Q25 16 18 30Q12 36 8 42L0 38Q10 30 10 22Q12 16 4 9Q12 12 13 20Q16 10 8 0z"/></svg>
        <div class="name"><b>野火</b>论坛</div>
        <div class="url">www.proewildfire.cn</div>
      </div>
    </div>
  </main>

</body>
</html>
```
FILE: styles.css
```css
* {
  margin: 0;
  padding: 0;
  box-sizing: border-box;
}

body {
  height: 100vh;
  display: flex;
  flex-direction: column;
  overflow: hidden;
  font-family: "Noto Sans", "Noto Sans CJK SC", sans-serif;
  font-size: 12px;
  line-height: 16px;
  color: #3a3f42;
  background: #f7f9fc;
}

button {
  font: inherit;
  color: inherit;
  background: none;
  border: none;
  cursor: pointer;
  white-space: nowrap;
}

button:disabled {
  color: #adb0b2;
}

.sprite {
  position: absolute;
  width: 0;
  height: 0;
}

.icon {
  width: 16px;
  height: 16px;
  flex: none;
  display: block;
}

.icon-lg {
  width: 32px;
  height: 32px;
  flex: none;
}

.caret {
  flex: none;
  border: 4px solid transparent;
  border-top-color: #5b6063;
  border-bottom: 0;
}

button:disabled .caret {
  border-top-color: #b0b3b5;
}

/* Title bar */
.title-bar {
  height: 24px;
  flex: none;
  display: flex;
  align-items: center;
  background: #dadfdf;
  padding-bottom: 4px;
}

.app-icon {
  margin-left: -3px;
}

.brand {
  width: 63px;
  padding-left: 4px;
  font-family: Lato, sans-serif;
  font-size: 19px;
  color: #4a4f52;
}

.brand sup {
  font-size: 8px;
  line-height: 0;
}

.quick-access {
  display: flex;
  align-items: center;
  gap: 8px;
}

.quick-access button {
  display: flex;
  align-items: center;
  gap: 6px;
}

.quick-access .customize {
  height: 22px;
  flex-direction: column;
  justify-content: center;
  gap: 1px;
  padding-left: 8px;
  border-left: 1px solid #b0b5b6;
}

.customize::before {
  content: '';
  width: 8px;
  height: 1px;
  background: #444;
}

.title-bar h1 {
  margin-left: auto;
  margin-right: 248px;
  font-size: 13px;
  font-weight: 400;
}

/* Ribbon tabs */
.tabs {
  height: 30px;
  flex: none;
  display: flex;
  padding-top: 3px;
  background: #3e4545;
}

.tabs a {
  padding: 0 24px;
  line-height: 29px;
  color: #fff;
  text-decoration: none;
  white-space: nowrap;
}

.tabs .file {
  padding: 0 20px 0 9px;
  background: linear-gradient(#66c63a, #4ca62b);
}

.tabs .active {
  padding: 0 25px 0 24px;
  background: #f7f9fc;
  color: #3f8020;
}

/* Ribbon */
.ribbon {
  flex: none;
  display: grid;
  grid-template-columns: 138px 146px 139px 218px 147px 163px 361px;
  font-size: 11px;
  border-bottom: 1px solid #b5c0c2;
}

.group {
  display: flex;
  flex-direction: column;
  align-items: center;
  padding: 0 7px;
  border-right: 1px solid #b4b9bb;
}

.group-body {
  width: 100%;
  display: flex;
  align-items: flex-start;
  justify-content: space-between;
}

.operations {
  padding-left: 0;
}

.operations .big {
  margin-left: -2px;
}

.cmds {
  display: grid;
  grid-template-rows: repeat(3, 27px);
  justify-items: start;
}

.cmds button {
  display: flex;
  align-items: center;
  gap: 4px;
}

.cmds .caret {
  margin-left: 2px;
}

.big {
  display: flex;
  flex-direction: column;
  align-items: center;
  padding-top: 5px;
}

.big span {
  margin: 10px 0 4px;
}

.group-title {
  display: flex;
  align-items: center;
  gap: 4px;
  height: 25px;
  padding-top: 1px;
}

/* Workspace */
.workspace {
  flex: 1;
  min-height: 0;
  display: flex;
}

.sidebar {
  width: 255px;
  flex: none;
  display: flex;
  flex-direction: column;
  background: #f5f9fa;
  border-right: 3px solid #dadfdf;
}

.side-tabs {
  height: 26px;
  flex: none;
  display: flex;
  background: #dadfdf;
}

.side-tabs button {
  padding: 0 7px;
}

.side-tabs .active {
  width: 21px;
  padding: 0;
  background: #f5f9fa;
}

.side-tools {
  height: 32px;
  flex: none;
  display: flex;
  align-items: center;
  gap: 6px;
  padding: 0 8px 0 3px;
}

.big-caret {
  border-width: 6px 5px 0;
  border-top-color: #777;
}

.grip {
  height: 14px;
  margin-right: 14px;
  border-left: 2px dotted #9a9fa1;
}

.sep {
  width: 1px;
  height: 24px;
  margin: 0 2px;
  background: #b4b9bb;
}

.pressed {
  background: #dcdfe1;
  outline: 1px solid #b0b4b6;
}

.side-tools .pressed {
  padding: 3px;
}

.side-tools .corner {
  margin-left: auto;
}

.more {
  margin-left: 8px;
  font-size: 16px;
}

.corner {
  position: relative;
}

.corner::after {
  content: '';
  position: absolute;
  right: 0;
  bottom: 0;
  border: 2px solid #444;
  border-top-color: transparent;
  border-left-color: transparent;
}

.search-row {
  flex: none;
  display: flex;
  align-items: center;
  gap: 5px;
}

.search-box {
  width: 183px;
  height: 27px;
  display: flex;
  align-items: center;
  background: #fff;
  border: 1px solid #a9b3b4;
}

.search-box input {
  flex: 1;
  min-width: 0;
  padding: 0 4px;
  border: none;
  outline: none;
  font: inherit;
}

.search-box button {
  padding: 0 4px;
  color: #a0a4a6;
}

.add {
  width: 12px;
  height: 12px;
  margin-left: 6px;
  background:
    linear-gradient(#9c9c9c, #9c9c9c) center / 12px 3px no-repeat,
    linear-gradient(#9c9c9c, #9c9c9c) center / 3px 12px no-repeat;
}

/* Model tree */
.tree {
  flex: 1;
  min-height: 0;
  padding-top: 5px;
  font-size: 11px;
  overflow: hidden;
}

.tree ul {
  list-style: none;
}

.tree li {
  position: relative;
  padding-left: 20px;
}

.node {
  height: 18px;
  display: flex;
  align-items: center;
  gap: 5px;
  white-space: nowrap;
}

/* guide lines */
.tree li::before {
  content: '';
  position: absolute;
  top: 0;
  bottom: 0;
  left: 8px;
  border-left: 1px solid #c3c8ca;
}

.tree li:last-child::before {
  bottom: auto;
  height: 9px;
}

.tree li:not(.open):not(.closed)::after {
  content: '';
  position: absolute;
  top: 9px;
  left: 8px;
  width: 9px;
  border-top: 1px solid #c3c8ca;
}

.tree .open::after,
.tree .closed::after {
  content: '';
  position: absolute;
  top: 7px;
  left: 5px;
  border: 4px solid transparent;
  border-top-color: #555;
  border-bottom: 0;
}

.tree .closed::after {
  top: 5px;
  left: 6px;
  border: 4px solid transparent;
  border-left-color: #555;
  border-right: 0;
}

.insert-bar {
  position: relative;
  height: 2px;
  margin: 6px 5px 0 0;
  background: #63c83c;
}

.insert-bar::before,
.insert-bar::after {
  content: '';
  position: absolute;
  top: -2px;
  left: 0;
  border: 3px solid transparent;
  border-left-color: #4caf2a;
  border-right: 0;
}

.insert-bar::after {
  left: auto;
  right: 0;
  border: 3px solid transparent;
  border-right-color: #4caf2a;
  border-left: 0;
}

.layers {
  height: 19px;
  flex: none;
  overflow: hidden;
}

.layers .pressed + .pressed {
  margin-left: -5px;
}

.layers::before {
  content: '';
  display: block;
  height: 3px;
  margin-right: 5px;
  background: #dadfdf;
}

/* Graphics area */
.viewport {
  flex: 1;
  min-width: 0;
  position: relative;
  overflow: hidden;
  background: #e8e9ed;
}

.model {
  display: block;
  width: 100%;
  fill: none;
}

.surface {
  stroke: #ff5ee0;
}

.edge {
  stroke: #6a5cc0;
}

.hidden-edge {
  stroke: #9a9a9f;
}

.pick {
  stroke: #2f6fff;
}

.markers path {
  stroke: #a8124a;
  stroke-width: 3;
}

.markers circle {
  fill: #a8124a;
  stroke: #e0a030;
  stroke-width: 2;
}

.callouts {
  stroke: #f80000;
  stroke-width: 2;
}

.view-tools {
  position: absolute;
  top: 8px;
  right: 20px;
  display: flex;
  align-items: center;
  height: 31px;
  padding: 0 2px;
  background: #f7f9fc;
  border: 1px solid #9fa5a6;
}

.view-tools button {
  width: 22px;
  height: 22px;
  margin: 0 2px;
  padding: 3px;
}

.watermark {
  position: absolute;
  right: 22px;
  bottom: 8px;
  font-style: italic;
}

.watermark .name {
  font-family: "Noto Sans CJK SC", sans-serif;
  font-size: 41px;
  font-weight: 300;
  line-height: 44px;
  color: #111;
}

.watermark b {
  font-weight: 300;
  color: #ff6a35;
}

.watermark .url {
  font-family: "DejaVu Sans", sans-serif;
  font-size: 15px;
  line-height: 16px;
  color: #8f9092;
}

.flame {
  position: absolute;
  top: -16px;
  left: 64px;
  width: 18px;
  height: 44px;
  fill: #ff6a35;
}
```
